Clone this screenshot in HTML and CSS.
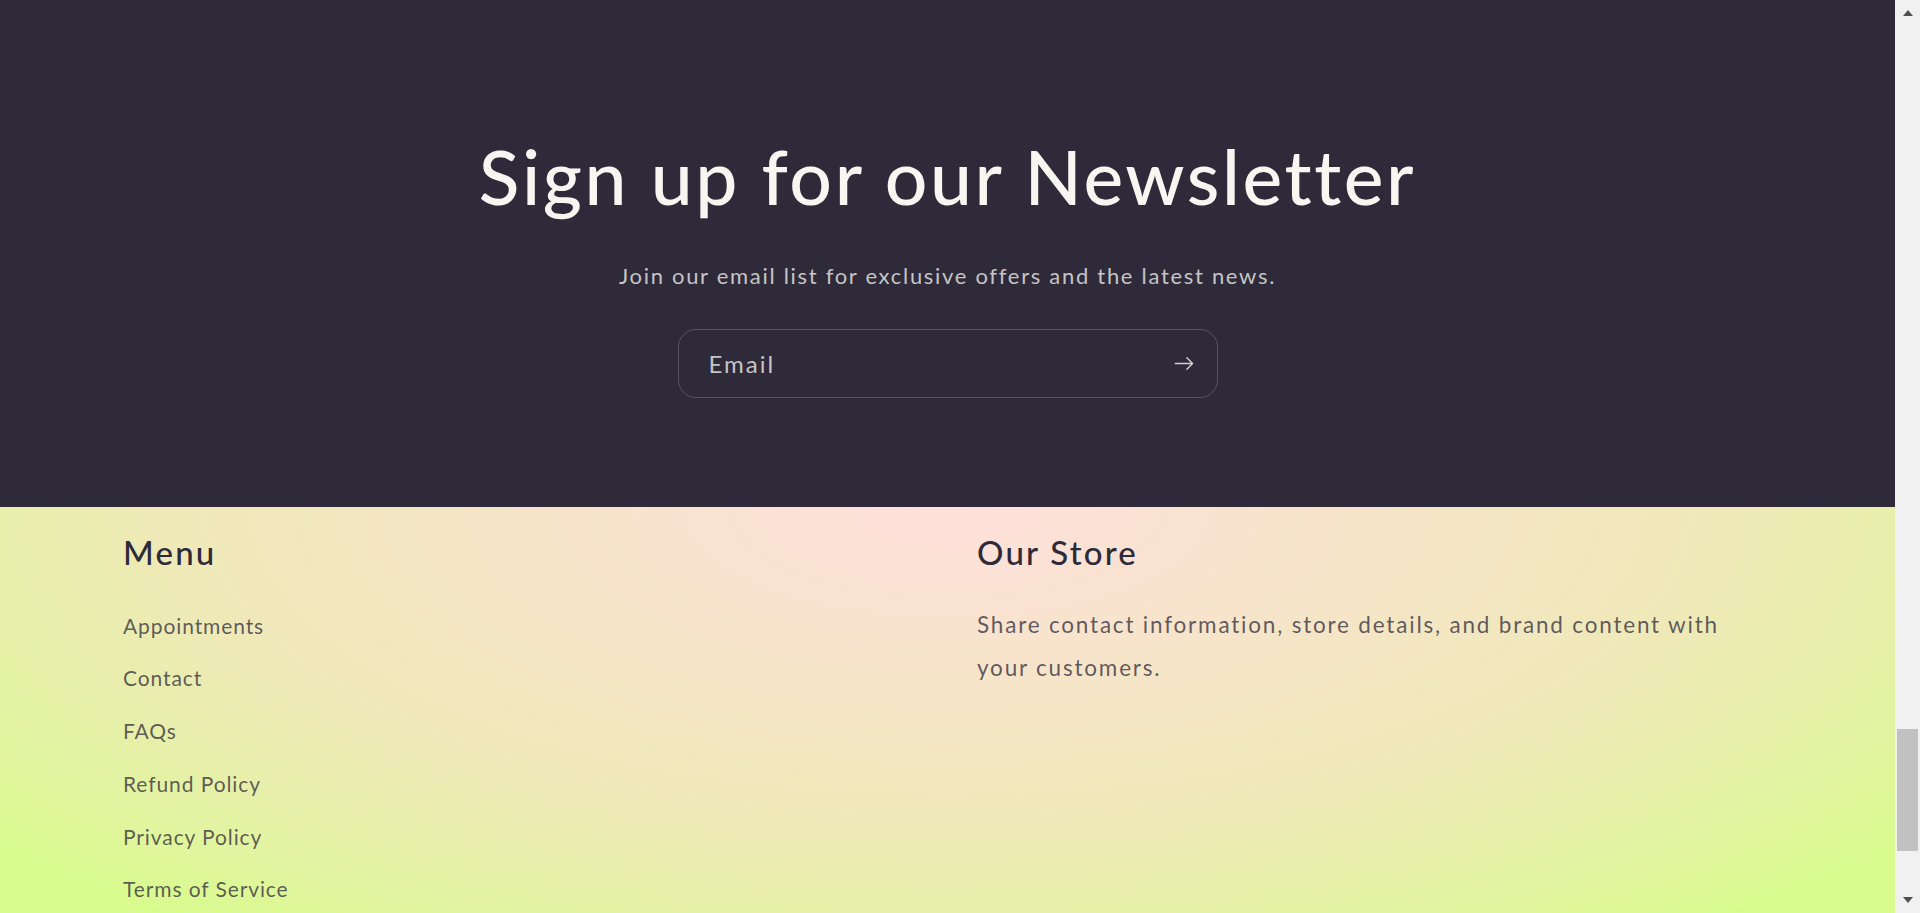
FILE: index.html
```html
<!DOCTYPE html>
<html lang="en">
<head>
<meta charset="utf-8">
<title>Newsletter</title>
<link rel="stylesheet" href="styles.css">
</head>
<body class="page">
<div class="page__main">
  <section class="newsletter">
    <h2 class="newsletter__title">Sign up for our Newsletter</h2>
    <p class="newsletter__text">Join our email list for exclusive offers and the latest news.</p>
    <form class="newsletter__form" onsubmit="return false">
      <label class="field">
        <span class="field__label">Email</span>
        <button class="field__button" type="button" aria-label="Subscribe">
          <svg class="icon-arrow" viewBox="0 0 14 10" aria-hidden="true"><path fill="currentColor" fill-rule="evenodd" clip-rule="evenodd" d="M8.537.808a.5.5 0 01.817-.162l4 4a.5.5 0 010 .708l-4 4a.5.5 0 11-.708-.708L11.793 5.5H1a.5.5 0 010-1h10.793L8.646 1.354a.5.5 0 01-.109-.546z"/></svg>
        </button>
      </label>
    </form>
  </section>
  <footer class="footer">
    <div class="footer__grid">
      <div class="footer__block">
        <h2 class="footer__heading">Menu</h2>
        <ul class="footer__list">
          <li><a href="#">Appointments</a></li>
          <li><a href="#">Contact</a></li>
          <li><a href="#">FAQs</a></li>
          <li><a href="#">Refund Policy</a></li>
          <li><a href="#">Privacy Policy</a></li>
          <li><a href="#">Terms of Service</a></li>
        </ul>
      </div>
      <div class="footer__block">
        <h2 class="footer__heading">Our Store</h2>
        <p class="footer__text">Share contact information, store details, and brand content with your customers.</p>
      </div>
    </div>
  </footer>
</div>
<div class="scrollbar" aria-hidden="true">
  <div class="scrollbar__button scrollbar__button--up"><span class="scrollbar__arrow scrollbar__arrow--up"></span></div>
  <div class="scrollbar__track"><div class="scrollbar__thumb"></div></div>
  <div class="scrollbar__button scrollbar__button--down"><span class="scrollbar__arrow scrollbar__arrow--down"></span></div>
</div>
</body>
</html>
```
FILE: styles.css
```css
html, body {
  margin: 0;
  height: 913px;
  overflow: hidden;
}
.page {
  display: flex;
  font-family: "Lato", "Open Sans", sans-serif;
}
.page__main {
  flex: 1;
  min-width: 0;
}
.newsletter {
  background: #2e2a39;
  color: #f8f6f1;
  height: 507px;
  box-sizing: border-box;
  padding-top: 136px;
  display: flex;
  flex-direction: column;
  align-items: center;
}
.newsletter__title {
  margin: 0;
  font-size: 75px;
  line-height: 80px;
  font-weight: 500;
  letter-spacing: 2.6px;
}
.newsletter__text {
  margin: 45px 0 0;
  font-size: 22px;
  line-height: 30px;
  letter-spacing: 1.7px;
  color: rgba(250, 248, 243, 0.75);
}
.newsletter__form {
  margin-top: 38px;
}
.field {
  box-sizing: border-box;
  width: 540px;
  height: 69px;
  border: 1px solid #58545f;
  border-radius: 18px;
  display: flex;
  align-items: center;
  justify-content: space-between;
  padding: 0 23px 0 30px;
}
.field__label {
  font-size: 24px;
  line-height: 30px;
  letter-spacing: 2px;
  color: rgba(250, 248, 243, 0.75);
}
.field__button {
  background: none;
  border: 0;
  padding: 0;
  display: flex;
  color: rgba(250, 248, 243, 0.8);
}
.icon-arrow {
  width: 20px;
  height: 15px;
}
.footer {
  height: 406px;
  overflow: hidden;
  box-sizing: border-box;
  padding: 25px 123px 0;
  background: radial-gradient(ellipse 1250px 520px at 50% 0%, #ffe0dc 0%, #fbe2d4 15%, #efe9b8 62%, #e3f3a2 85%, #d9fb8e 100%);
  color: #2e2a39;
}
.footer__grid {
  display: grid;
  grid-template-columns: 1fr 1fr;
  column-gap: 59px;
}
.footer__heading {
  margin: 0;
  font-size: 33px;
  line-height: 40px;
  font-weight: 500;
  letter-spacing: 2.2px;
}
.footer__list {
  list-style: none;
  margin: 27.5px 0 0;
  padding: 0;
}
.footer__list li {
  font-size: 21px;
  line-height: 52.8px;
  letter-spacing: 0.9px;
}
.footer__list a {
  color: rgba(46, 42, 57, 0.75);
  text-decoration: none;
}
.footer__text {
  margin: 31px 0 0;
  max-width: 770px;
  font-size: 22.5px;
  line-height: 43px;
  letter-spacing: 1.8px;
  color: rgba(46, 42, 57, 0.75);
}
.scrollbar {
  width: 25px;
  height: 913px;
  flex: none;
  background: #f1f1f1;
  display: flex;
  flex-direction: column;
}
.scrollbar__button {
  height: 25px;
  flex: none;
  display: flex;
  justify-content: center;
  align-items: flex-start;
  box-sizing: border-box;
}
.scrollbar__button--up {
  padding-top: 10px;
}
.scrollbar__button--down {
  padding-top: 9px;
}
.scrollbar__arrow {
  width: 0;
  height: 0;
  border-left: 5.5px solid transparent;
  border-right: 5.5px solid transparent;
}
.scrollbar__arrow--up {
  border-bottom: 6px solid #505050;
}
.scrollbar__arrow--down {
  border-top: 6px solid #505050;
}
.scrollbar__track {
  flex: 1;
  display: flex;
  flex-direction: column;
  align-items: center;
}
.scrollbar__thumb {
  margin-top: 704px;
  width: 21px;
  height: 122px;
  background: #c1c1c1;
}
```
